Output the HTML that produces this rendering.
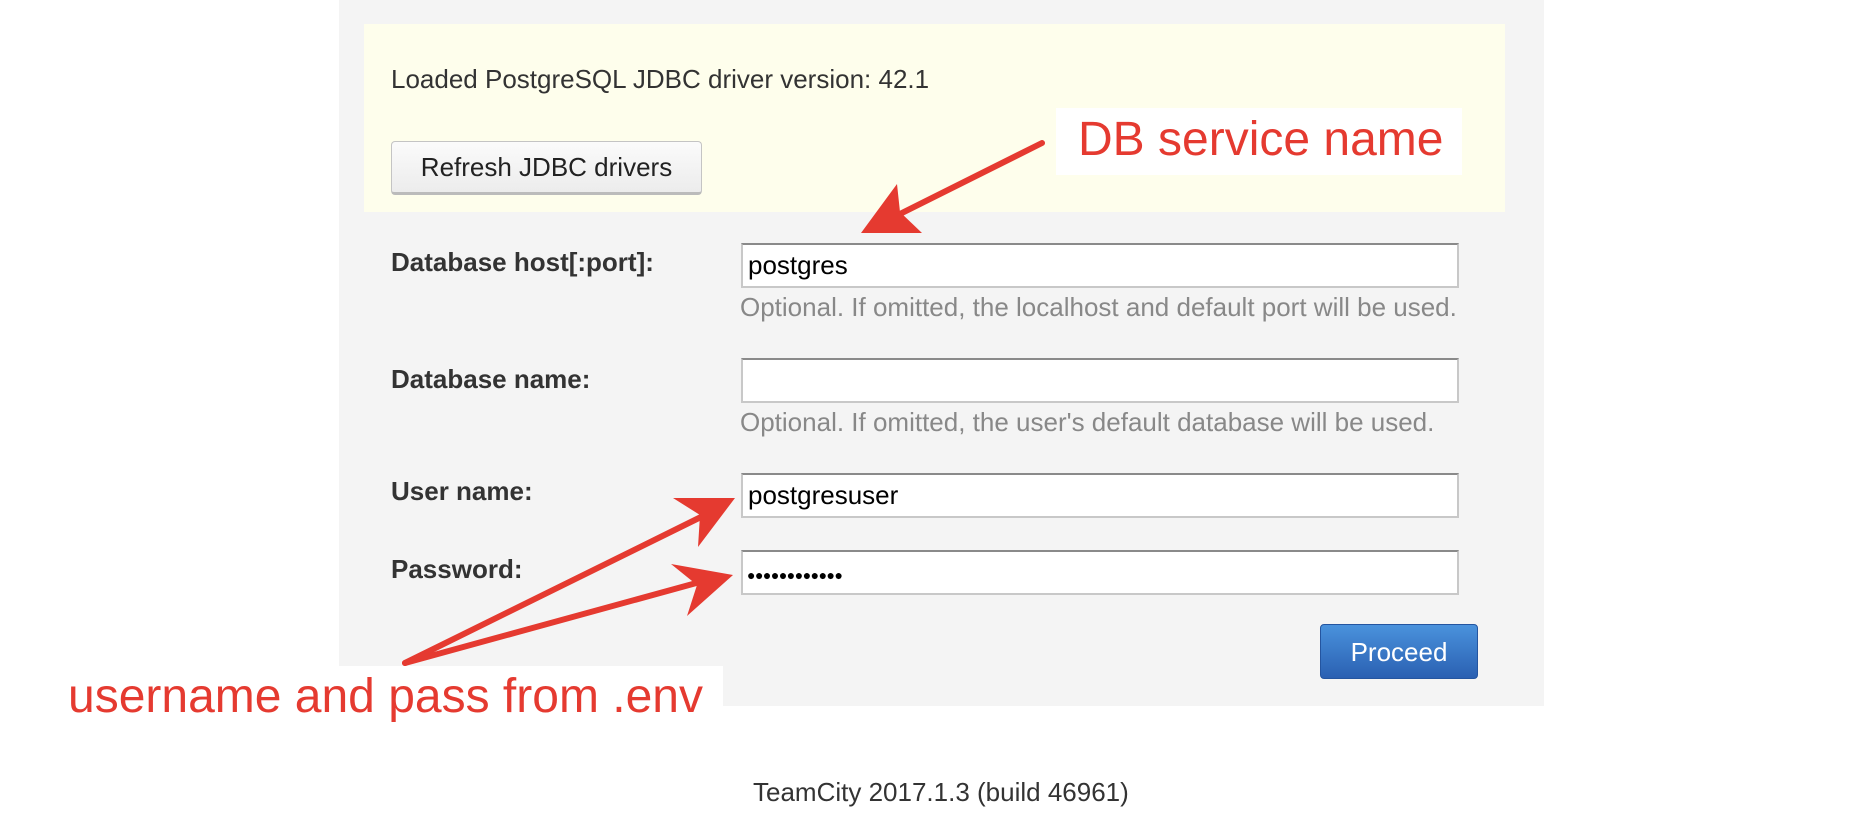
<!DOCTYPE html>
<html><head><meta charset="utf-8"><style>
body{margin:0;width:1864px;height:836px;background:#fff;position:relative;overflow:hidden;font-family:"Liberation Sans",Arial,sans-serif;color:#333}
div,span{position:absolute}
.t{font-size:26px;line-height:26px;white-space:nowrap}
.b{font-weight:bold;color:#333}
.h{color:#888}
.in{left:741px;width:718px;background:#fff;border:2px solid #c8c8c8;border-top-color:#8a8a8a;box-sizing:border-box}
.r{color:#e53a30;font-size:48px;line-height:48px;white-space:nowrap}
</style></head><body>
<div style="left:339px;top:0;width:1205px;height:706px;background:#f4f4f4"></div>
<div style="left:364px;top:24px;width:1141px;height:188px;background:#fefeec"></div>
<div class="t" style="left:391px;top:66px;color:#333">Loaded PostgreSQL JDBC driver version: 42.1</div>
<div style="left:391px;top:141px;width:311px;height:54px;box-sizing:border-box;border:1px solid #c4c4c4;border-bottom:3px solid #bbb;border-radius:4px;background:linear-gradient(#fbfbfb,#ececec)"></div>
<div class="t" style="left:391px;width:311px;text-align:center;top:154px;color:#222">Refresh JDBC drivers</div>

<div class="t b" style="left:391px;top:249px">Database host[:port]:</div>
<div class="in" style="top:243px;height:45px"></div>
<div class="t" style="left:748px;top:252px;color:#000">postgres</div>
<div class="t h" style="left:740px;top:294px">Optional. If omitted, the localhost and default port will be used.</div>

<div class="t b" style="left:391px;top:366px">Database name:</div>
<div class="in" style="top:358px;height:45px"></div>
<div class="t h" style="left:740px;top:409px">Optional. If omitted, the user's default database will be used.</div>

<div class="t b" style="left:391px;top:478px">User name:</div>
<div class="in" style="top:473px;height:45px"></div>
<div class="t" style="left:748px;top:482px;color:#000">postgresuser</div>

<div class="t b" style="left:391px;top:556px">Password:</div>
<div class="in" style="top:550px;height:45px"></div>
<div class="t" style="left:747px;top:562px;color:#000;font-size:14px;letter-spacing:-0.5px">●●●●●●●●●●●●</div>

<div style="left:1320px;top:624px;width:158px;height:55px;box-sizing:border-box;border:1px solid #2455a0;border-radius:4px;background:linear-gradient(#4a92dc,#2a60b2)"></div>
<div class="t" style="left:1320px;width:158px;text-align:center;top:639px;color:#fff">Proceed</div>

<div class="t" style="left:753px;top:779px;color:#333">TeamCity 2017.1.3 (build 46961)</div>

<div style="left:1056px;top:108px;width:406px;height:67px;background:#fff"></div>
<div class="r" style="left:1078px;top:116px">DB service name</div>
<div style="left:339px;top:666px;width:384px;height:60px;background:#fff"></div>
<div class="r" style="left:68px;top:673px">username and pass from .env</div>

<svg width="1864" height="836" style="position:absolute;left:0;top:0">
<g stroke="#e53a30" stroke-width="6" stroke-linecap="round" fill="#e53a30">
<line x1="1042" y1="143" x2="888" y2="220"/>
<line x1="405" y1="663" x2="705" y2="515"/>
<line x1="405" y1="663" x2="700" y2="582"/>
</g>
<g fill="#e53a30">
<polygon points="861,233 897,184 900,212 922,233"/>
<polygon points="735,498 673,498 700,515 698,547"/>
<polygon points="733,575 671,564 697,585 687,616"/>
</g>
</svg>
</body></html>
